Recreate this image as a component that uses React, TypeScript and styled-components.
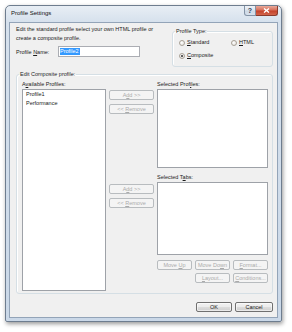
import styled, { createGlobalStyle } from 'styled-components'

const GlobalStyle = createGlobalStyle`
    html, body {
        margin: 0;
        padding: 0;
        background: #ffffff;
    }
    body {
        width: 292px;
        height: 332px;
        overflow: hidden;
        font-family: "Liberation Sans", Arial, sans-serif;
        font-size: 5.5px;
        color: #1b1b1b;
    }
    * {
        box-sizing: border-box;
    }
`

const Window = styled.div`
    margin: 5px 0 0 5px;
    width: 277px;
    height: 317px;
    border: 1px solid #6e7d8f;
    border-radius: 5px 5px 2px 2px;
    background: linear-gradient(180deg, #e8eef5 0%, #d6e1ed 16px, #cad8e8 100%);
    box-shadow: 1px 2px 4px rgba(0, 0, 0, 0.4);
    display: flex;
    flex-direction: column;
    padding: 0 3px 3px;
`

const TitleBar = styled.div`
    height: 16px;
    display: flex;
    align-items: flex-start;
    justify-content: space-between;
`

const Title = styled.span`
    font-size: 6px;
    line-height: 15px;
    padding-left: 2px;
    color: #111;
`

const CaptionButtons = styled.div`
    display: flex;
`

const CaptionButton = styled.div<{ $close?: boolean }>`
    width: ${p => (p.$close ? '22px' : '12px')};
    height: 10px;
    display: flex;
    align-items: center;
    justify-content: center;
    border: 1px solid ${p => (p.$close ? '#8a3a2c' : '#8393a6')};
    border-top: none;
    border-left: ${p => (p.$close ? 'none' : undefined)};
    border-radius: ${p => (p.$close ? '0 0 3px 0' : '0 0 0 3px')};
    background: ${p =>
        p.$close
            ? 'linear-gradient(180deg, #e9a99a 0%, #d7705c 45%, #c4412a 55%, #d2654c 100%)'
            : 'linear-gradient(180deg, #eef2f7 0%, #dde5ee 45%, #cdd8e5 55%, #d8e2ed 100%)'};
    color: #2a3c56;
    font-size: 7px;
    font-weight: bold;
    line-height: 1;
`

const Client = styled.div`
    flex: 1;
    background: #f0f0f0;
    border: 1px solid #93a4b8;
    padding: 2px 4px 0 6px;
    display: flex;
    flex-direction: column;
`

const TopRow = styled.div`
    display: flex;
    justify-content: space-between;
    align-items: flex-start;
`

const Intro = styled.div`
    line-height: 9px;
    white-space: nowrap;
`

const NameRow = styled.div`
    margin-top: 3px;
    display: flex;
    align-items: center;
`

const NameLabel = styled.label`
    width: 42px;
`

const TextBox = styled.div`
    width: 82px;
    height: 11px;
    border: 1px solid #abadb3;
    background: #ffffff;
    padding-left: 1px;
    display: flex;
    align-items: center;
`

const Selection = styled.span`
    background: #3399ff;
    color: #ffffff;
    line-height: 7px;
    padding: 0 1px 0 0;
`

const Group = styled.fieldset<{ $width: number }>`
    margin: 0;
    min-inline-size: 0;
    width: ${p => p.$width}px;
    border: 1px solid #d5dfe5;
    border-radius: 3px;
    box-shadow: inset 1px 1px 0 #ffffff;
`

const TypeGroup = styled(Group)`
    margin-top: 2px;
    padding: 2px 0 6px 6px;
`

const CompositeGroup = styled(Group)`
    margin-top: 3px;
    padding: 0 4px 2px 5px;
`

const Legend = styled.legend<{ $shift: number }>`
    margin-left: ${p => p.$shift}px;
    padding: 0 1px;
    line-height: 9px;
`

const RadioGrid = styled.div`
    display: grid;
    grid-template-columns: 52px auto;
    row-gap: 4px;
`

const RadioItem = styled.label`
    display: flex;
    align-items: center;
    gap: 2px;
    line-height: 9px;
`

const RadioCircle = styled.span<{ $checked?: boolean }>`
    width: 6px;
    height: 6px;
    border-radius: 50%;
    border: 1px solid #a8a096;
    background: radial-gradient(circle at 40% 40%, #ffffff, #e0ddd8);
    display: inline-flex;
    align-items: center;
    justify-content: center;

    &::after {
        content: '';
        width: 2px;
        height: 2px;
        border-radius: 50%;
        background: ${p => (p.$checked ? '#2b2b2b' : 'transparent')};
    }
`

const CompositeGrid = styled.div`
    display: grid;
    grid-template-columns: 84px 45px 111px;
    grid-template-rows: 10px 79px 14px 73px 36px;
    column-gap: 3px;
`

const FieldLabel = styled.span<{ $row: number; $col: number }>`
    grid-row: ${p => p.$row};
    grid-column: ${p => p.$col};
    line-height: 10px;
    align-self: end;
`

const ListBox = styled.div<{ $rows: string; $col: number }>`
    grid-row: ${p => p.$rows};
    grid-column: ${p => p.$col};
    border: 1px solid #9ea2a8;
    background: #ffffff;
    padding: 0 3px;
    line-height: 9px;
`

const MoveColumn = styled.div<{ $row: number; $top: number }>`
    grid-row: ${p => p.$row};
    grid-column: 2;
    display: flex;
    flex-direction: column;
    gap: 4px;
    padding-top: ${p => p.$top}px;
`

const Button = styled.button<{ $width?: number }>`
    width: ${p => (p.$width ? `${p.$width}px` : '100%')};
    height: 10px;
    padding: 0;
    font-family: inherit;
    font-size: 5.5px;
    line-height: 8px;
    color: #1b1b1b;
    border: 1px solid #707070;
    border-radius: 2px;
    background: linear-gradient(180deg, #f2f2f2 0%, #ebebeb 50%, #dddddd 50%, #cfcfcf 100%);
    box-shadow: inset 0 0 0 1px rgba(255, 255, 255, 0.55);

    &:disabled {
        color: #ababab;
        border-color: #b8bcbf;
        background: #f4f4f4;
        box-shadow: none;
    }
`

const ActionGrid = styled.div`
    grid-row: 5;
    grid-column: 3;
    display: grid;
    grid-template-columns: repeat(3, 35px);
    column-gap: 3px;
    row-gap: 3px;
    align-content: start;
    padding-top: 5px;
`

const SecondRowStart = styled.div`
    grid-column: 2;
`

const Footer = styled.div`
    margin-top: 8px;
    display: flex;
    justify-content: flex-end;
    gap: 3px;
`

function App() {
    return (
        <>
            <GlobalStyle />
            <Window>
                <TitleBar>
                    <Title>Profile Settings</Title>
                    <CaptionButtons>
                        <CaptionButton>?</CaptionButton>
                        <CaptionButton $close>
                            <svg width="7" height="5" viewBox="0 0 7 5">
                                <path d="M1 0.5 L6 4.5 M6 0.5 L1 4.5" stroke="#ffffff" strokeWidth="1.4" />
                            </svg>
                        </CaptionButton>
                    </CaptionButtons>
                </TitleBar>
                <Client>
                    <TopRow>
                        <div>
                            <Intro>
                                Edit the standard profile select your own HTML profile or
                                <br />
                                create a composite profile.
                            </Intro>
                            <NameRow>
                                <NameLabel>Profile <u>N</u>ame:</NameLabel>
                                <TextBox>
                                    <Selection>Profile2</Selection>
                                </TextBox>
                            </NameRow>
                        </div>
                        <TypeGroup $width={101}>
                            <Legend $shift={-4}>Profile Type:</Legend>
                            <RadioGrid>
                                <RadioItem>
                                    <RadioCircle />
                                    <span><u>S</u>tandard</span>
                                </RadioItem>
                                <RadioItem>
                                    <RadioCircle />
                                    <span><u>H</u>TML</span>
                                </RadioItem>
                                <RadioItem>
                                    <RadioCircle $checked />
                                    <span><u>C</u>omposite</span>
                                </RadioItem>
                            </RadioGrid>
                        </TypeGroup>
                    </TopRow>
                    <CompositeGroup $width={257}>
                        <Legend $shift={-3}>Edit Composite profile:</Legend>
                        <CompositeGrid>
                            <FieldLabel $row={1} $col={1}>A<u>v</u>ailable Profiles:</FieldLabel>
                            <FieldLabel $row={1} $col={3}>Selected Prof<u>i</u>les:</FieldLabel>
                            <ListBox $rows="2 / 6" $col={1}>
                                <div>Profile1</div>
                                <div>Performance</div>
                            </ListBox>
                            <MoveColumn $row={2} $top={1}>
                                <Button disabled>A<u>d</u>d &gt;&gt;</Button>
                                <Button disabled>&lt;&lt; <u>R</u>emove</Button>
                            </MoveColumn>
                            <ListBox $rows="2" $col={3} />
                            <FieldLabel $row={3} $col={3}>Selected T<u>a</u>bs:</FieldLabel>
                            <MoveColumn $row={4} $top={1.5}>
                                <Button disabled>A<u>d</u>d &gt;&gt;</Button>
                                <Button disabled>&lt;&lt; <u>R</u>emove</Button>
                            </MoveColumn>
                            <ListBox $rows="4" $col={3} />
                            <ActionGrid>
                                <Button disabled>Move <u>U</u>p</Button>
                                <Button disabled>Move Do<u>w</u>n</Button>
                                <Button disabled><u>F</u>ormat...</Button>
                                <SecondRowStart>
                                    <Button disabled><u>L</u>ayout...</Button>
                                </SecondRowStart>
                                <Button disabled><u>C</u>onditions...</Button>
                            </ActionGrid>
                        </CompositeGrid>
                    </CompositeGroup>
                    <Footer>
                        <Button $width={36}>OK</Button>
                        <Button $width={38}>Cancel</Button>
                    </Footer>
                </Client>
            </Window>
        </>
    )
}

export default App
